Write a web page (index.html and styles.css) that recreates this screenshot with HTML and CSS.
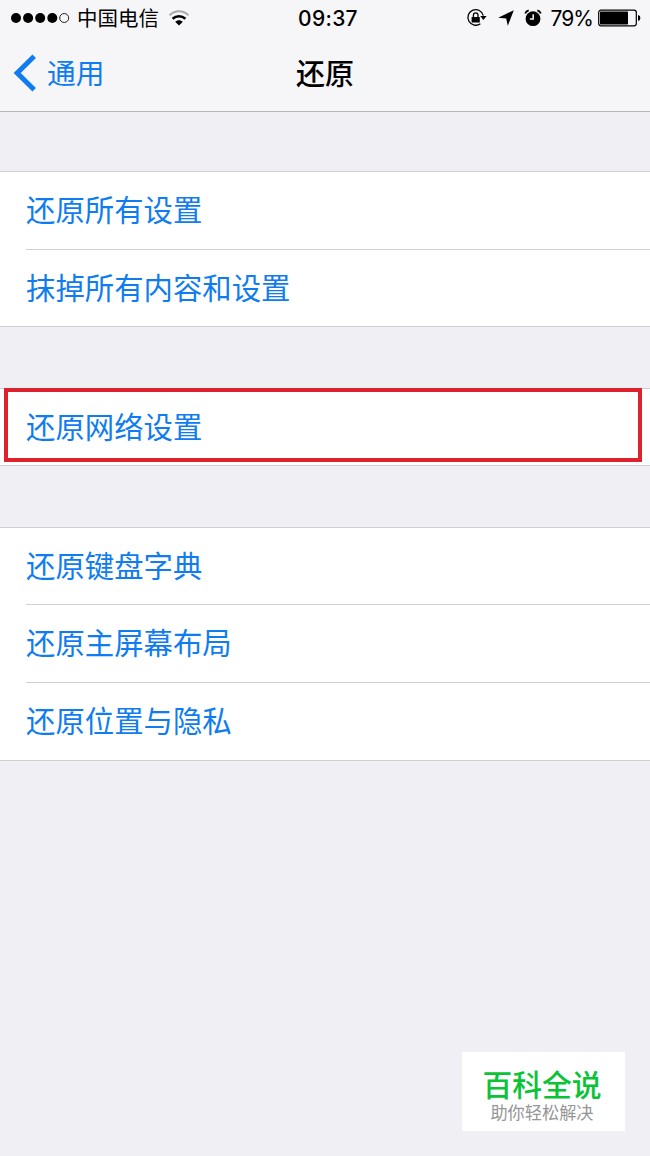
FILE: index.html
```
<!DOCTYPE html>
<html lang="zh-CN">
  <head>
    <meta charset="UTF-8">
    <title>还原</title>
    <link rel="stylesheet" href="styles.css">
  </head>

  <body>

    <header>
      <div class="status">
        <div class="status-left">
          <svg class="signal" width="60" height="12" viewBox="0 0 60 12">
            <circle cx="6" cy="6" r="5"/>
            <circle cx="18.1" cy="6" r="5"/>
            <circle cx="30.2" cy="6" r="5"/>
            <circle cx="42.3" cy="6" r="5"/>
            <circle class="empty" cx="54.2" cy="6" r="4.5"/>
          </svg>
          <span class="carrier">中国电信</span>
          <svg class="wifi" width="22" height="18" viewBox="0 0 22 18">
            <path class="far" d="M1.5 6.3 C7 1 15 1 20.5 6.3"/>
            <path class="near" d="M4.6 9.8 C8.3 6.4 13.7 6.4 17.4 9.8"/>
            <path d="M7.2 12.8 C9.4 10.7 12.6 10.7 14.8 12.8 L11 16.6 Z"/>
          </svg>
        </div>
        <div class="clock">09:37</div>
        <div class="status-right">
          <svg class="lock" width="22" height="20" viewBox="0 0 22 20">
            <path class="ring" d="M14.4 15.7 A7.8 7.8 0 1 1 17.3 7.6"/>
            <path d="M14.2 8 H20.6 L17.4 12 Z"/>
            <rect x="5.6" y="9" width="8.2" height="5.6" rx=".6"/>
            <path class="ring" d="M7.4 9.5 V7.2 A2.3 2.3 0 0 1 12 7.2 V9.5"/>
          </svg>
          <svg class="arrow" width="16" height="16" viewBox="0 0 16 16">
            <path d="M15.8 .2 L9.8 15.8 L8.2 8.6 L.2 7.8 Z"/>
          </svg>
          <svg class="alarm" width="18" height="18" viewBox="0 0 18 18">
            <circle cx="9" cy="9.7" r="7.4"/>
            <path class="bell" d="M1.2 4.6 Q2 2 4.7 1.4 M16.8 4.6 Q16 2 13.3 1.4"/>
            <path class="hands" d="M9.2 5.2 V10 H5.9"/>
          </svg>
          <span class="percent">79%</span>
          <svg class="battery" width="43" height="18" viewBox="0 0 43 18">
            <rect class="case" x=".7" y="1.2" width="37.6" height="15.6" rx="2.2"/>
            <rect x="2" y="2.6" width="28" height="12.8" rx=".6"/>
            <path d="M40 6 Q42.4 6.6 42.4 9 Q42.4 11.4 40 12 Z"/>
          </svg>
        </div>
      </div>

      <div class="nav">
        <div class="back">
          <svg width="24" height="38" viewBox="0 0 24 38">
            <path d="M21.2 2.3 L4.2 19 L21.2 35.7"/>
          </svg>
          <span>通用</span>
        </div>
        <h1>还原</h1>
      </div>
    </header>

    <ul class="group">
      <li>还原所有设置</li>
      <li>抹掉所有内容和设置</li>
    </ul>

    <ul class="group network">
      <li>还原网络设置</li>
    </ul>

    <ul class="group">
      <li>还原键盘字典</li>
      <li>还原主屏幕布局</li>
      <li>还原位置与隐私</li>
    </ul>

    <div class="watermark">
      <div class="brand">百科全说</div>
      <div class="slogan">助你轻松解决</div>
    </div>

  </body>
</html>
```
FILE: styles.css
```
* {
  box-sizing: border-box;
}

body {
  margin: 0;
  height: 1156px;
  position: relative;
  overflow: hidden;
  background: #efeff4;
  font-family: "Noto Sans CJK SC", sans-serif;
}

header {
  height: 112px;
  background: #f6f6f8;
  border-bottom: 1px solid #b4b4b8;
}

.status {
  display: grid;
  grid-template-columns: 1fr auto 1fr;
  align-items: center;
  height: 36px;
  padding: 0 9px 0 10px;
  color: #000;
}

.status-left,
.status-right {
  display: flex;
  align-items: center;
}

.status-right {
  justify-content: flex-end;
}

.signal .empty {
  fill: none;
  stroke: #222;
  stroke-width: 1;
}

.carrier {
  margin-left: 7px;
  font-size: 20.5px;
  line-height: 34px;
  padding-bottom: 2px;
}

.wifi {
  margin-left: 9px;
}

.wifi .far,
.wifi .near {
  fill: none;
  stroke: #000;
  stroke-width: 2.6;
}

.wifi .far {
  stroke: #a9a9ab;
  stroke-width: 2;
}

.clock {
  padding-left: 5px;
  font-family: Inter, sans-serif;
  font-size: 21px;
  font-weight: 500;
  letter-spacing: 0.3px;
}

.lock .ring {
  fill: none;
  stroke: #000;
  stroke-width: 1.3;
}

.arrow {
  margin-left: 10px;
}

.alarm {
  margin-left: 10px;
}

.alarm .bell {
  fill: none;
  stroke: #000;
  stroke-width: 1.8;
}

.alarm .hands {
  fill: none;
  stroke: #f6f6f8;
  stroke-width: 1.5;
}

.percent {
  margin-left: 8px;
  font-family: Inter, sans-serif;
  font-size: 21px;
  letter-spacing: -0.9px;
}

.battery {
  margin-left: 5px;
}

.battery .case {
  fill: none;
  stroke: #000;
  stroke-width: 1.2;
}

.nav {
  display: grid;
  grid-template-columns: 1fr auto 1fr;
  align-items: center;
  height: 74px;
}

.back {
  display: flex;
  align-items: center;
  padding-left: 13px;
  color: #0f7cf0;
  font-size: 28.8px;
}

.back svg {
  margin-right: 10px;
  fill: none;
  stroke: #0f7cf0;
  stroke-width: 5;
}

.back span,
h1 {
  line-height: 70px;
  padding-bottom: 3px;
}

h1 {
  margin: 0;
  font-size: 29px;
  font-weight: 500;
}

.group {
  margin: 59px 0 0;
  padding: 0 0 0 26px;
  list-style: none;
  background: #fff;
  border-top: 1px solid #cfcfd3;
  border-bottom: 1px solid #cfcfd3;
}

.group + .group {
  margin-top: 61px;
}

.group li {
  height: 77px;
  color: #0f7cf0;
  font-size: 29.4px;
  line-height: 73px;
}

.group li + li {
  height: 78px;
  border-top: 1px solid #d0d0d3;
  line-height: 73px;
}

.group li:nth-child(2):last-child {
  height: 77px;
}

.network li {
  height: 76px;
}

.group:last-of-type li:first-child {
  height: 76px;
}

/* red frame drawn over the network row */
.network {
  position: relative;
}

.network::after {
  content: "";
  position: absolute;
  box-sizing: border-box;
  top: -1px;
  left: 4px;
  right: 8px;
  height: 74px;
  border: 4px solid #dc232d;
}

.watermark {
  position: absolute;
  right: 25px;
  bottom: 25px;
  width: 163px;
  height: 79px;
  padding: 14px 3px 0 0;
  background: #fff;
  text-align: center;
}

.brand {
  color: #0ac337;
  font-size: 29.8px;
  font-weight: 500;
  line-height: 34px;
}

.slogan {
  color: #969696;
  font-size: 17.2px;
  line-height: 23px;
}
```
